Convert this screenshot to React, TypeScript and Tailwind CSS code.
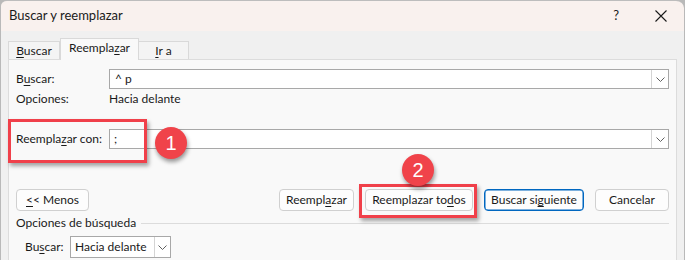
import React from "react";

const U = ({ children }: { children: React.ReactNode }) => (
  <span className="underline decoration-1 underline-offset-[2px]">{children}</span>
);

const Chevron = () => (
  <svg width="9" height="5" viewBox="0 0 9 5" fill="none">
    <path d="M0.5 0.5 L4.5 4.5 L8.5 0.5" stroke="#606060" strokeWidth="1" />
  </svg>
);

const Btn = ({ children, w, blue }: { children: React.ReactNode; w: string; blue?: boolean }) => (
  <div
    className={
      "h-[22px] flex items-center justify-center rounded-[4px] bg-[#fdfdfd] text-[#1a1a1a] whitespace-nowrap " +
      w +
      (blue ? " border border-[#0067c0] shadow-[inset_0_0_0_0.5px_#0067c0]" : " border border-[#d0d0d0]")
    }
  >
    {children}
  </div>
);

export default function App() {
  return (
    <div
      className="w-[685px] h-[260px] overflow-hidden bg-[#b9b9b9] flex text-[12px] whitespace-nowrap"
      style={{ fontFamily: 'Lato, "Noto Sans", sans-serif' }}
    >
      <div className="w-[683px] ml-[1px] h-[260px] flex flex-col rounded-tr-[8px] rounded-tl-[6px] overflow-hidden border-t border-[#bdbdbd] relative">
        {/* title bar */}
        <div className="h-[30px] bg-[#f9f1ee] flex items-center pl-[8px] text-[#1a1a1a] shrink-0 text-[13px]">
          <span className="flex-1">Buscar y reemplazar</span>
          <span className="text-[13px] mr-[36px]">?</span>
          <svg width="12" height="12" viewBox="0 0 12 12" className="mr-[17px]">
            <path d="M0.5 0.5 L11.5 11.5 M11.5 0.5 L0.5 11.5" stroke="#1a1a1a" strokeWidth="1.1" />
          </svg>
        </div>
        {/* body */}
        <div className="flex-1 bg-[#f0f0f0] px-[7px] flex flex-col">
          {/* tabs */}
          <div className="h-[28px] flex items-end shrink-0 text-[#1a1a1a]">
            <div className="w-[52px] h-[18px] border border-b-0 border-[#d9d9d9] bg-[#f4f4f4] flex items-center justify-center">
              <span><U>B</U>uscar</span>
            </div>
            <div className="w-[79px] h-[22px] border border-b-0 border-[#d9d9d9] bg-[#f9f9f9] flex items-center justify-center mb-[-1px] relative z-10 pb-[3px]">
              <span>Reempla<U>z</U>ar</span>
            </div>
            <div className="w-[50px] h-[18px] border border-b-0 border-l-0 border-[#d9d9d9] bg-[#f4f4f4] flex items-center justify-center">
              <span><U>I</U>r a</span>
            </div>
          </div>
          {/* panel */}
          <div className="flex-1 border border-b-0 border-[#dcdcdc] bg-[#f9f9f9] pl-[7px] pr-[7px] pt-[9px] text-[#1a1a1a] flex flex-col">
            <div className="flex items-center h-[20px]">
              <div className="w-[93px]">B<U>u</U>scar:</div>
              <div className="flex-1 h-[20px] border border-[#a8a8a8] bg-white flex items-center">
                <span className="flex-1 pl-[5px]">^ p</span>
                <div className="w-[17px] h-[18px] border-l border-[#d4d4d4] flex items-center justify-center">
                  <Chevron />
                </div>
              </div>
            </div>
            <div className="flex items-center h-[20px]">
              <div className="w-[93px]">Opciones:</div>
              <div>Hacia delante</div>
            </div>
            <div className="flex items-center h-[20px] mt-[20px]">
              <div className="w-[93px]">Reempla<U>z</U>ar con:</div>
              <div className="flex-1 h-[20px] border border-[#a8a8a8] bg-white flex items-center">
                <span className="flex-1 pl-[4px]">;</span>
                <div className="w-[17px] h-[18px] border-l border-[#d4d4d4] flex items-center justify-center">
                  <Chevron />
                </div>
              </div>
            </div>
            <div className="flex items-center h-[22px] mt-[40px]">
              <Btn w="w-[73px]">
                <span><U>&lt;</U>&lt; Menos</span>
              </Btn>
              <div className="flex-1" />
              <Btn w="w-[75px]">
                <span>Reempl<U>a</U>zar</span>
              </Btn>
              <div className="w-[11px]" />
              <Btn w="w-[108px]">
                <span>Reemplazar to<U>d</U>os</span>
              </Btn>
              <div className="w-[11px]" />
              <Btn w="w-[100px]" blue>
                <span>Buscar si<U>g</U>uiente</span>
              </Btn>
              <div className="w-[11px]" />
              <Btn w="w-[74px]">
                <span>Cancelar</span>
              </Btn>
            </div>
            <div className="flex items-center h-[22px] mt-[1px]">
              <span>Opciones de búsqueda</span>
              <div className="flex-1 h-px bg-[#dcdcdc] ml-[5px] mt-[1px]" />
            </div>
            <div className="flex items-center h-[22px] mt-[2px] pl-[9px]">
              <div className="w-[45px]">Bu<U>s</U>car:</div>
              <div className="w-[101px] h-[22px] border border-[#a8a8a8] bg-white flex items-center">
                <span className="flex-1 pl-[4px]">Hacia delante</span>
                <div className="w-[16px] h-[20px] border-l border-[#d4d4d4] flex items-center justify-center">
                  <Chevron />
                </div>
              </div>
            </div>
          </div>
        </div>

        {/* annotations */}
        <div className="absolute left-[7px] top-[118px] w-[139px] h-[44px] border-[3px] border-[#f0404a] shadow-[2px_3px_4px_rgba(0,0,0,0.35)]" />
        <div className="absolute left-[154px] top-[126px] w-[32px] h-[32px] rounded-full bg-[#f0434a] shadow-[1px_3px_4px_rgba(0,0,0,0.4)] flex items-center justify-center text-white text-[20px]" style={{ fontFamily: '"Liberation Sans", Arial, sans-serif' }}>
          1
        </div>
        <div className="absolute left-[358px] top-[183px] w-[118px] h-[34px] border-[3px] border-[#f0404a] shadow-[2px_3px_4px_rgba(0,0,0,0.35)]" />
        <div className="absolute left-[401px] top-[153px] w-[32px] h-[32px] rounded-full bg-[#f0434a] shadow-[1px_3px_4px_rgba(0,0,0,0.4)] flex items-center justify-center text-white text-[20px]" style={{ fontFamily: '"Liberation Sans", Arial, sans-serif' }}>
          2
        </div>
      </div>
    </div>
  );
}
